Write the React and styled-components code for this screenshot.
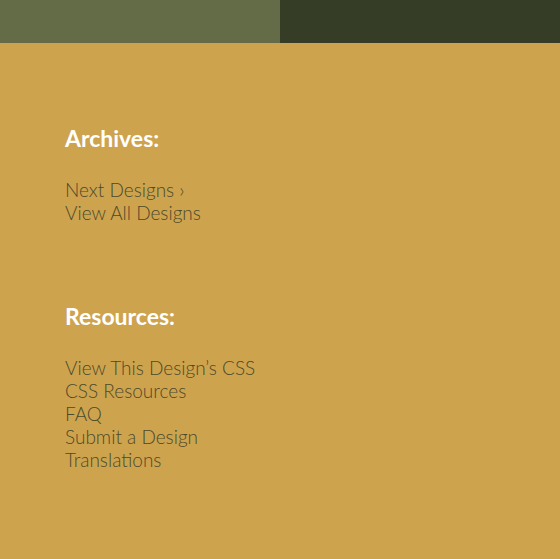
import React from 'react'
import styled, { createGlobalStyle } from 'styled-components'

const Global = createGlobalStyle`
html,body{margin:0;padding:0;}
body{background:#cea34e;}
`

const Page = styled.div`
width:560px;
height:559px;
background:#cea34e;
font-family:"Lato","Noto Sans",sans-serif;
`
const TopBar = styled.div`
display:flex;
height:43px;
`
const Half = styled.div`
flex:1;
background:${p => p.dark ? '#363d27' : '#636b47'};
`
const Content = styled.div`
padding:81px 65px 0;
`
const Section = styled.section`
margin-bottom:${p => p.gap || 0}px;
`
const Heading = styled.h3`
margin:0 0 26px;
font-size:23px;
line-height:28px;
font-weight:700;
color:#fff;
`
const List = styled.ul`
list-style:none;
margin:0;
padding:0;
`
const Item = styled.li`
font-size:19px;
line-height:23px;
font-weight:300;
color:#4c4a2b;
`

const archives = ['Next Designs \u203a', 'View All Designs']
const resources = ['View This Design\u2019s CSS', 'CSS Resources', 'FAQ', 'Submit a Design', 'Translations']

const App = () => {
    return (
        <Page>
            <Global />
            <TopBar>
                <Half />
                <Half dark />
            </TopBar>
            <Content>
                <Section gap={78}>
                    <Heading>Archives:</Heading>
                    <List>
                        {archives.map(a => <Item key={a}>{a}</Item>)}
                    </List>
                </Section>
                <Section>
                    <Heading>Resources:</Heading>
                    <List>
                        {resources.map(r => <Item key={r}>{r}</Item>)}
                    </List>
                </Section>
            </Content>
        </Page>
    )
}

export default App
